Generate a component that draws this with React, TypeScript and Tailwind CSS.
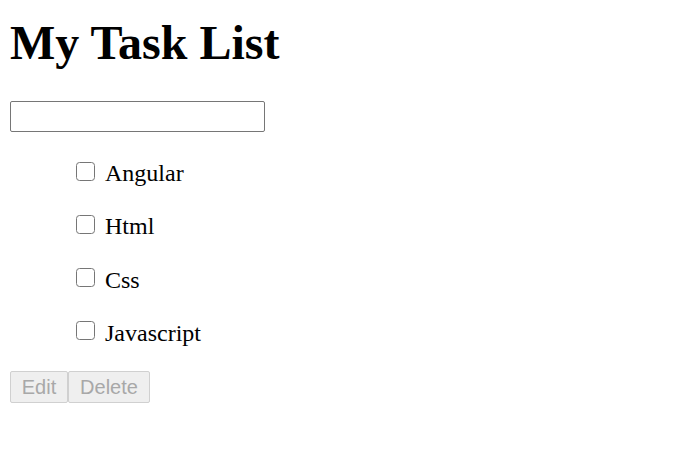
import React from "react";

const items = ["Angular", "Html", "Css", "Javascript"];

export default function App() {
  return (
    <div className="min-h-[450px] bg-white pl-[10px] pt-[15px] text-black">
      <h1 className="font-['Liberation_Serif',serif] text-[48px] leading-[56px] font-bold">My Task List</h1>
      <input
        type="text"
        className="mt-[30px] block h-[31px] w-[255px] rounded-[2px] border border-[#767676] bg-white outline-none"
      />
      <div className="mt-[27px] flex flex-col gap-[25.33px] font-['Liberation_Serif',serif] text-[24px] leading-[28px]">
        {items.map((t) => (
          <div key={t} className="flex h-[28px] items-start gap-[10px]">
            <span className="ml-[66px] mt-[2.5px] block h-[19px] w-[19px] rounded-[3.5px] border border-[#767676] bg-white" />
            <span>{t}</span>
          </div>
        ))}
      </div>
      <div className="mt-[24.4px] flex font-['Liberation_Sans',sans-serif] text-[20px]">
        <button
          disabled
          className="flex h-[32px] w-[58px] items-center justify-center rounded-[2px] border border-[#d0d0d0] bg-[#efefef] text-[#a8a8a8]"
        >
          Edit
        </button>
        <button
          disabled
          className="flex h-[32px] w-[82px] items-center justify-center rounded-[2px] border border-[#d0d0d0] bg-[#efefef] text-[#a8a8a8]"
        >
          Delete
        </button>
      </div>
    </div>
  );
}
